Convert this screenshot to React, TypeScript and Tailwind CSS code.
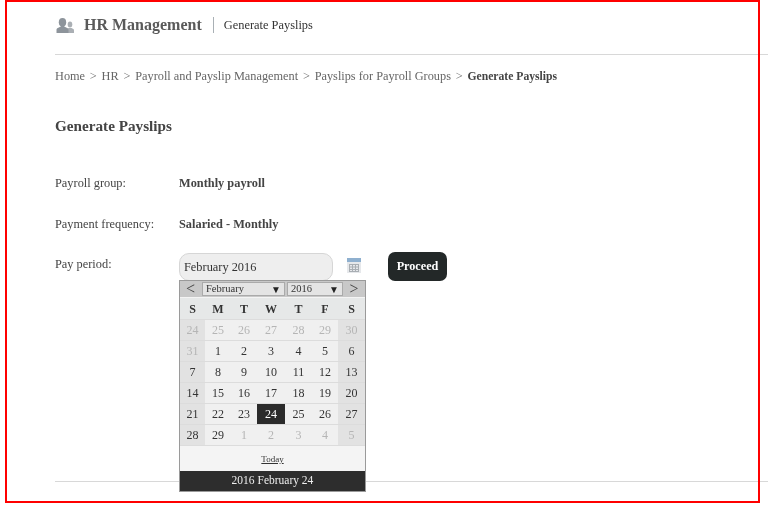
import React from "react";

const crumbs = ["Home", "HR", "Payroll and Payslip Management", "Payslips for Payroll Groups"];

const weeks: [number, boolean][][] = [
  [[24, true], [25, true], [26, true], [27, true], [28, true], [29, true], [30, true]],
  [[31, true], [1, false], [2, false], [3, false], [4, false], [5, false], [6, false]],
  [[7, false], [8, false], [9, false], [10, false], [11, false], [12, false], [13, false]],
  [[14, false], [15, false], [16, false], [17, false], [18, false], [19, false], [20, false]],
  [[21, false], [22, false], [23, false], [24, false], [25, false], [26, false], [27, false]],
  [[28, false], [29, false], [1, true], [2, true], [3, true], [4, true], [5, true]],
];

const dayNames = ["S", "M", "T", "W", "T", "F", "S"];
const colWidths = ["w-[25px]", "w-[26px]", "w-[26px]", "w-[28px]", "w-[27px]", "w-[26px]", "w-[27px]"];

const PeopleIcon = () => (
  <svg width="18" height="15" viewBox="0 0 18 15" className="text-[#8d949b]">
    <ellipse cx="14" cy="6.500" rx="2.300" ry="2.900" fill="currentColor" opacity="0.75" />
    <path
      d="M11 15v-3.500l1.500-1.500h3l1.800 1c0.400 0.300 0.700 0.700 0.700 1.200V15z"
      fill="currentColor"
      opacity="0.75"
    />
    <ellipse cx="6.500" cy="4.300" rx="3.700" ry="4.300" fill="currentColor" />
    <path
      d="M0.500 15v-3.200c0-0.800 0.500-1.400 1.300-1.800l3-1.500V7h3.400v1.500l3 1.500c0.800 0.400 1.300 1 1.300 1.800V15z"
      fill="currentColor"
    />
  </svg>
);

const CalendarIcon = () => (
  <svg width="14" height="15" viewBox="0 0 14 15">
    <rect x="0" y="0" width="14" height="15" fill="#e6e8eb" />
    <rect x="0" y="0" width="14" height="4" fill="#8fb0cf" />
    <g stroke="#a9aeb3" strokeWidth="1">
      <path d="M2 6.500h10M2 9h10M2 11.500h10M2 13.500h10" />
      <path d="M2.500 6v8M5.500 6v8M8.500 6v8M11.500 6v8" />
    </g>
  </svg>
);

const Calendar = () => (
  <div className="absolute left-0 top-[27px] w-[187px] border border-[#9a9a9a] bg-[#f4f4f4] font-['Liberation_Serif',serif] text-[#333]">
    <div className="flex h-[16px] items-center bg-[#c8c8c8]">
      <span className="w-[21px] text-center text-[16px] leading-none text-[#444]">&lt;</span>
      <div className="ml-px flex h-[14px] w-[83px] items-center justify-between border border-[#aaa] bg-[#e4e4e4] px-[3px] text-[10.500px]">
        <span>February</span>
        <span className="text-[10px] text-[#222]">▼</span>
      </div>
      <div className="ml-[2px] flex h-[14px] w-[56px] items-center justify-between border border-[#aaa] bg-[#e4e4e4] px-[3px] text-[10.500px]">
        <span>2016</span>
        <span className="text-[10px] text-[#222]">▼</span>
      </div>
      <span className="flex-1 text-center text-[16px] leading-none text-[#444]">&gt;</span>
    </div>
    <div className="mt-px flex h-[21px] items-center bg-[#e6e8e8] text-[12px] font-bold">
      {dayNames.map((d, i) => (
        <span key={i} className={`${colWidths[i]} text-center`}>
          {d}
        </span>
      ))}
    </div>
    {weeks.map((week, r) => (
      <div key={r} className="flex h-[21px] border-t border-[#dcdcdc] text-[12px]">
        {week.map(([n, muted], i) => {
          const weekend = i === 0 || i === 6;
          const selected = r === 4 && i === 3;
          return (
            <span
              key={i}
              className={`${colWidths[i]} flex items-center justify-center ${
                selected
                  ? "bg-[#2b2b2b] text-white"
                  : weekend
                    ? "bg-[#e2e2e2]"
                    : "bg-[#f0f0f0]"
              } ${muted ? "text-[#b5b5b5]" : ""}`}
            >
              {n}
            </span>
          );
        })}
      </div>
    ))}
    <div className="flex h-[26px] items-center justify-center border-t border-[#dcdcdc] pt-[2px] text-[9px] underline">
      Today
    </div>
    <div className="flex h-[20px] items-center justify-center bg-[#2d2d2d] text-[11.500px] text-[#eee]">
      2016 February 24
    </div>
  </div>
);

const App = () => {
  return (
    <div className="relative h-[506px] w-[768px] overflow-hidden bg-white font-['Liberation_Serif',serif] text-[#444] blur-[0.4px]">
      <div className="ml-[55px]">
        <header className="flex h-[55px] items-center border-b border-[#d8d8d8] pb-[4px]">
          <span className="ml-px">
            <PeopleIcon />
          </span>
          <span className="ml-[10px] text-[16px] font-bold text-[#5a5a5a]">HR Management</span>
          <span className="ml-[11px] h-[16px] border-l border-[#a9b0b5]" />
          <span className="ml-[10px] mt-px text-[12.400px] text-[#333]">Generate Payslips</span>
        </header>

        <nav className="mt-[12px] flex h-[16px] items-baseline gap-[4.800px] text-[12.300px] text-[#666]">
          {crumbs.map((c) => (
            <React.Fragment key={c}>
              <span>{c}</span>
              <span>&gt;</span>
            </React.Fragment>
          ))}
          <span className="text-[11.650px] font-bold text-[#444]">Generate Payslips</span>
        </nav>

        <h2 className="mt-[33px] text-[15.200px] font-bold leading-[20px]">Generate Payslips</h2>

        <div className="mt-[37px] flex h-[20px] items-center text-[12.350px]">
          <span className="w-[124px]">Payroll group:</span>
          <span className="font-bold">Monthly payroll</span>
        </div>
        <div className="mt-[21px] flex h-[20px] items-center text-[12.350px]">
          <span className="w-[124px]">Payment frequency:</span>
          <span className="font-bold">Salaried - Monthly</span>
        </div>

        <div className="mt-[19px] flex items-start text-[12.350px]">
          <span className="w-[124px] leading-[22px]">Pay period:</span>
          <div className="relative">
            <div className="flex h-[28px] w-[154px] items-center rounded-[10px] border border-[#d6d6d6] bg-[#eeeeee] px-[4px] text-[#333]">
              February 2016
            </div>
            <Calendar />
          </div>
          <div className="ml-[14px] mt-[5px]">
            <CalendarIcon />
          </div>
          <button className="-mt-px ml-[27px] h-[29px] w-[59px] rounded-[7px] bg-[#232828] text-[12.200px] font-bold text-white">
            Proceed
          </button>
        </div>

        <div className="mt-[200px] border-t border-[#d8d8d8]" />
      </div>

      <div className="absolute left-[5px] top-0 h-[503px] w-[755px] border-2 border-[#ff0000]" />
    </div>
  );
};

export default App;
